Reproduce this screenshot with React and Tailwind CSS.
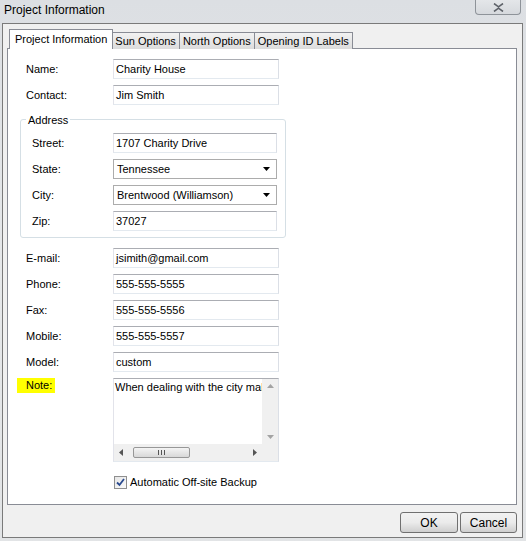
import React from "react";

const font = { fontFamily: '"Liberation Sans", Arial, sans-serif' };

function Field({ value, width = "w-[166px]" }) {
  return (
    <div
      className={`${width} h-[20px] border border-[#abadb3] border-l-[#e2e3ea] border-r-[#dbdfe6] border-b-[#e3e9ef] bg-white pl-[2px] flex items-center text-[11px] text-black`}
    >
      {value}
    </div>
  );
}

function Select({ value }) {
  return (
    <div className="w-[164px] h-[20px] border border-[#acacac] bg-white flex items-center justify-between pl-[3px] pr-[6px] text-[11px] text-black">
      <span>{value}</span>
      <svg width="7" height="4" viewBox="0 0 7 4">
        <path d="M0 0H7L3.5 4Z" fill="#000" />
      </svg>
    </div>
  );
}

function Row({ label, children, labelW = "w-[87px]" }) {
  return (
    <div className="flex items-center h-[20px]">
      <div className={`${labelW} text-[11px] text-black shrink-0`}>{label}</div>
      {children}
    </div>
  );
}

function Tab({ label, active }) {
  if (active) {
    return (
      <div className="h-[20px] px-[5px] -mr-[1px] bg-white border border-b-0 border-[#898c95] flex items-center text-[11px] relative z-10 -ml-[2px]">
        {label}
      </div>
    );
  }
  return (
    <div className="h-[17px] mt-[3px] px-[3px] bg-gradient-to-b from-[#f2f2f2] to-[#dcdcdc] border border-b-0 border-[#898c95] flex items-center text-[11px] -ml-[1px] first:ml-0">
      {label}
    </div>
  );
}

export default function App() {
  return (
    <div
      className="w-[526px] h-[541px] bg-gradient-to-b from-[#dcdfe3] via-[#e6e8ea] to-[#e2e4e6] flex flex-col overflow-hidden"
      style={font}
    >
      {/* title bar */}
      <div className="h-[23px] flex items-start justify-between shrink-0">
        <div className="pl-[4px] pt-[1px] text-[12px] text-black">Project Information</div>
        <div className="w-[46px] h-[15px] mr-[5px] border border-t-0 border-[#8e9399] rounded-b-[4px] bg-gradient-to-b from-[#e4e6e9] to-[#d6d9dd] flex items-center justify-center">
          <svg width="11" height="9" viewBox="0 0 11 9">
            <path d="M1 0.5L5.5 3.8L10 0.5M1 8.5L5.5 5.2L10 8.5" stroke="#5d6168" strokeWidth="1.6" fill="none" />
          </svg>
        </div>
      </div>

      {/* frame */}
      <div className="ml-[2px] w-[521px] h-[515px] border border-[#7a7a7a] bg-[#f0f0f0] flex flex-col pl-[4px] pt-[5px]">
        <div className="flex items-end pl-[4px] h-[20px] relative z-10 -mb-[1px]">
          <Tab label="Project Information" active />
          <Tab label="Sun Options" />
          <Tab label="North Options" />
          <Tab label="Opening ID Labels" />
        </div>

        <div className="w-[510px] h-[457px] bg-white border border-[#898c95] flex flex-col pt-[10px] pl-[18px]">
          <div className="flex flex-col gap-[6px]">
            <Row label="Name:">
              <Field value="Charity House" />
            </Row>
            <Row label="Contact:">
              <Field value="Jim Smith" />
            </Row>
          </div>

          {/* address group */}
          <div className="relative mt-[14px] -ml-[6px] w-[266px] h-[119px] border border-[#d5dfe5] rounded-[3px] pt-[13px] pl-[11px]">
            <div className="absolute -top-[8px] left-[5px] bg-white px-[2px] text-[11px] text-black">
              Address
            </div>
            <div className="flex flex-col gap-[6px]">
              <Row label="Street:" labelW="w-[81px]">
                <Field value="1707 Charity Drive" width="w-[164px]" />
              </Row>
              <Row label="State:" labelW="w-[81px]">
                <Select value="Tennessee" />
              </Row>
              <Row label="City:" labelW="w-[81px]">
                <Select value="Brentwood (Williamson)" />
              </Row>
              <Row label="Zip:" labelW="w-[81px]">
                <Field value="37027" width="w-[164px]" />
              </Row>
            </div>
          </div>

          <div className="flex flex-col gap-[6px] mt-[10px]">
            <Row label="E-mail:">
              <Field value="jsimith@gmail.com" />
            </Row>
            <Row label="Phone:">
              <Field value="555-555-5555" />
            </Row>
            <Row label="Fax:">
              <Field value="555-555-5556" />
            </Row>
            <Row label="Mobile:">
              <Field value="555-555-5557" />
            </Row>
            <Row label="Model:">
              <Field value="custom" />
            </Row>
          </div>

          {/* note */}
          <div className="flex items-start mt-[6px]">
            <div className="w-[87px] shrink-0 text-[11px] text-black leading-[15px]">
              <span className="inline-block bg-[#ffff00] pl-[9px] pr-[3px] -ml-[9px]">Note:</span>
            </div>
            <div className="w-[166px] h-[84px] border border-[#abadb3] border-b-[#e3e9ef] border-r-[#dbdfe6] border-l-[#e2e3ea] bg-white flex flex-col">
              <div className="flex flex-1 min-h-0">
                <div className="flex-1 overflow-hidden whitespace-nowrap pl-[1px] pt-[1px] text-[11px] leading-[14px] text-black">
                  When dealing with the city mak
                </div>
                <div className="w-[16px] bg-[#f0f0f0] flex flex-col items-center justify-between py-[5px]">
                  <svg width="7" height="4" viewBox="0 0 7 4">
                    <path d="M0 4L3.5 0L7 4Z" fill="#a3a3a3" />
                  </svg>
                  <svg width="7" height="4" viewBox="0 0 7 4">
                    <path d="M0 0H7L3.5 4Z" fill="#a3a3a3" />
                  </svg>
                </div>
              </div>
              <div className="h-[17px] flex shrink-0">
                <div className="flex-1 bg-[#f0f0f0] flex items-center px-[5px]">
                  <svg width="4" height="7" viewBox="0 0 4 7">
                    <path d="M4 0V7L0 3.5Z" fill="#555" />
                  </svg>
                  <div className="ml-[10px] w-[57px] h-[11px] rounded-[2px] border border-[#979797] bg-gradient-to-b from-[#f4f4f4] to-[#d8d8d8] flex items-center justify-center gap-[1px]">
                    <span className="w-[1px] h-[5px] bg-[#555]" />
                    <span className="w-[1px] h-[5px] bg-[#555] ml-[1px]" />
                    <span className="w-[1px] h-[5px] bg-[#555] ml-[1px]" />
                  </div>
                  <div className="flex-1" />
                  <svg width="4" height="7" viewBox="0 0 4 7">
                    <path d="M0 0V7L4 3.5Z" fill="#555" />
                  </svg>
                </div>
                <div className="w-[16px] bg-[#f0f0f0]" />
              </div>
            </div>
          </div>

          {/* checkbox */}
          <div className="flex items-center mt-[12px] ml-[88px] gap-[3px]">
            <div className="w-[13px] h-[13px] border border-[#8f8f8f] bg-gradient-to-br from-[#e6e6e6] to-[#fafafa] flex items-center justify-center">
              <svg width="9" height="9" viewBox="0 0 9 9">
                <path d="M1 4.5L3.5 7L8 1" stroke="#2a4a8f" strokeWidth="1.8" fill="none" />
              </svg>
            </div>
            <span className="text-[11px] text-black">Automatic Off-site Backup</span>
          </div>
        </div>

        {/* buttons */}
        <div className="flex justify-end gap-[2px] mt-[7px] pr-[5px]">
          <button className="w-[58px] h-[21px] border border-[#707070] rounded-[3px] bg-gradient-to-b from-[#f2f2f2] via-[#ebebeb] to-[#cfcfcf] text-[12px] text-black">
            OK
          </button>
          <button className="w-[57px] h-[21px] border border-[#707070] rounded-[3px] bg-gradient-to-b from-[#f2f2f2] via-[#ebebeb] to-[#cfcfcf] text-[12px] text-black">
            Cancel
          </button>
        </div>
      </div>
    </div>
  );
}
